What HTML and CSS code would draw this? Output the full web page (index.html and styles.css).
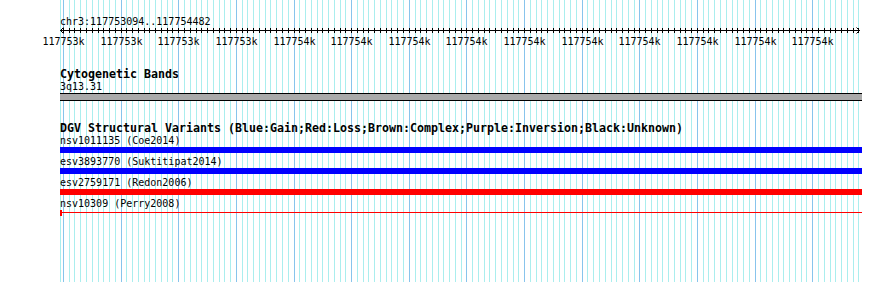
FILE: index.html
```html
<!DOCTYPE html>
<html lang="en">
<head>
  <meta charset="UTF-8" />
  <meta name="viewport" content="width=device-width, initial-scale=1.0" />
  <title>chr3:117753094..117754482</title>
  <link rel="stylesheet" href="styles.css">
</head>
<body>
  <div class="panel">
    <svg id="grid" class="grid" width="890" height="282"></svg>

    <div class="tracks">
      <div class="ruler-title">chr3:117753094..117754482</div>
      <svg id="ruler" class="ruler" width="802" height="40"></svg>

      <div class="track">
        <div class="track-title">Cytogenetic Bands</div>
        <div class="label">3q13.31</div>
        <div class="band"></div>
      </div>

      <div class="track dgv">
        <div class="track-title">DGV Structural Variants (Blue:Gain;Red:Loss;Brown:Complex;Purple:Inversion;Black:Unknown)</div>
        <div class="feature">
          <div class="label">nsv1011135 (Coe2014)</div>
          <div class="bar gain"></div>
        </div>
        <div class="feature">
          <div class="label">esv3893770 (Suktitipat2014)</div>
          <div class="bar gain"></div>
        </div>
        <div class="feature">
          <div class="label">esv2759171 (Redon2006)</div>
          <div class="bar loss"></div>
        </div>
        <div class="feature">
          <div class="label">nsv10309 (Perry2008)</div>
          <div class="bar loss-thin"></div>
        </div>
      </div>
    </div>
  </div>

  <script>
    const inicio = 117753094;
    const fim = 117754482;
    const esquerda = 60;
    const escala = 800 / (fim - inicio);
    const ns = "http://www.w3.org/2000/svg";

    function px(bp) {
      return esquerda + (bp - inicio) * escala;
    }

    function linha(svg, x1, y1, x2, y2, cls) {
      const l = document.createElementNS(ns, "line");
      l.setAttribute("x1", x1);
      l.setAttribute("y1", y1);
      l.setAttribute("x2", x2);
      l.setAttribute("y2", y2);
      if (cls) l.setAttribute("class", cls);
      svg.appendChild(l);
    }

    // grade de fundo
    const grade = document.getElementById("grid");
    linha(grade, 60.5, 0, 60.5, 282, "minor");
    for (let bp = 117753100; bp <= fim; bp += 10) {
      const x = Math.floor(px(bp)) + 0.5;
      linha(grade, x, 0, x, 282, bp % 100 === 0 ? "major" : "minor");
    }

    // régua
    const regua = document.getElementById("ruler");
    linha(regua, 0, 2.5, 800, 2.5);
    const setas = document.createElementNS(ns, "path");
    setas.setAttribute("d", "M3.5 -0.5 L0.5 2.5 L3.5 5.5 M796.5 -0.5 L799.5 2.5 L796.5 5.5");
    regua.appendChild(setas);
    for (let bp = 117753100; bp <= fim; bp += 10) {
      const x = Math.floor(px(bp)) - esquerda + 0.5;
      linha(regua, x, 0, x, 5);
      if (bp % 100 === 0) {
        const t = document.createElementNS(ns, "text");
        t.setAttribute("x", x);
        t.setAttribute("y", 17);
        t.setAttribute("text-anchor", "middle");
        t.textContent = Math.round(bp / 1000) + "k";
        regua.appendChild(t);
      }
    }
  </script>
</body>
</html>
```

FILE: styles.css
```css
body {
  margin: 0;
  background: #fff;
  color: #000;
  font-family: "DejaVu Sans Mono", "Liberation Mono", monospace;
  font-size: 10px;
}
.panel {
  position: relative;
  width: 890px;
  height: 282px;
  overflow: hidden;
}
.grid {
  position: absolute;
  left: 0;
  top: 0;
}
.grid .minor {
  stroke: #aaeeee;
  stroke-width: 1;
}
.grid .major {
  stroke: #88c4ec;
  stroke-width: 1;
}
.tracks {
  position: relative;
  width: 802px;
  padding: 16px 0 0 60px;
}
.ruler-title {
  height: 12px;
  line-height: 12px;
}
.ruler {
  display: block;
  overflow: visible;
}
.ruler line,
.ruler path {
  stroke: #000;
  stroke-width: 1;
  fill: none;
}
.ruler text {
  font-family: "DejaVu Sans Mono", "Liberation Mono", monospace;
  font-size: 10px;
  fill: #000;
}
.track-title {
  font-weight: bold;
  font-size: 11.63px;
  line-height: 13px;
  height: 13px;
  white-space: nowrap;
}
.label {
  height: 12px;
  line-height: 12px;
  white-space: nowrap;
}
.band {
  height: 6px;
  background: #aaaaaa;
  border-top: 1px solid #000;
  border-bottom: 1px solid #000;
}
.dgv {
  margin-top: 21px;
}
.bar {
  height: 6px;
  margin-bottom: 3px;
}
.gain {
  background: #0000ff;
}
.loss {
  background: #ff0000;
}
.loss-thin {
  background:
    linear-gradient(#ff0000, #ff0000) 0 0 / 2px 6px no-repeat,
    linear-gradient(#ff0000, #ff0000) 0 2px / 100% 1px no-repeat;
}
```
